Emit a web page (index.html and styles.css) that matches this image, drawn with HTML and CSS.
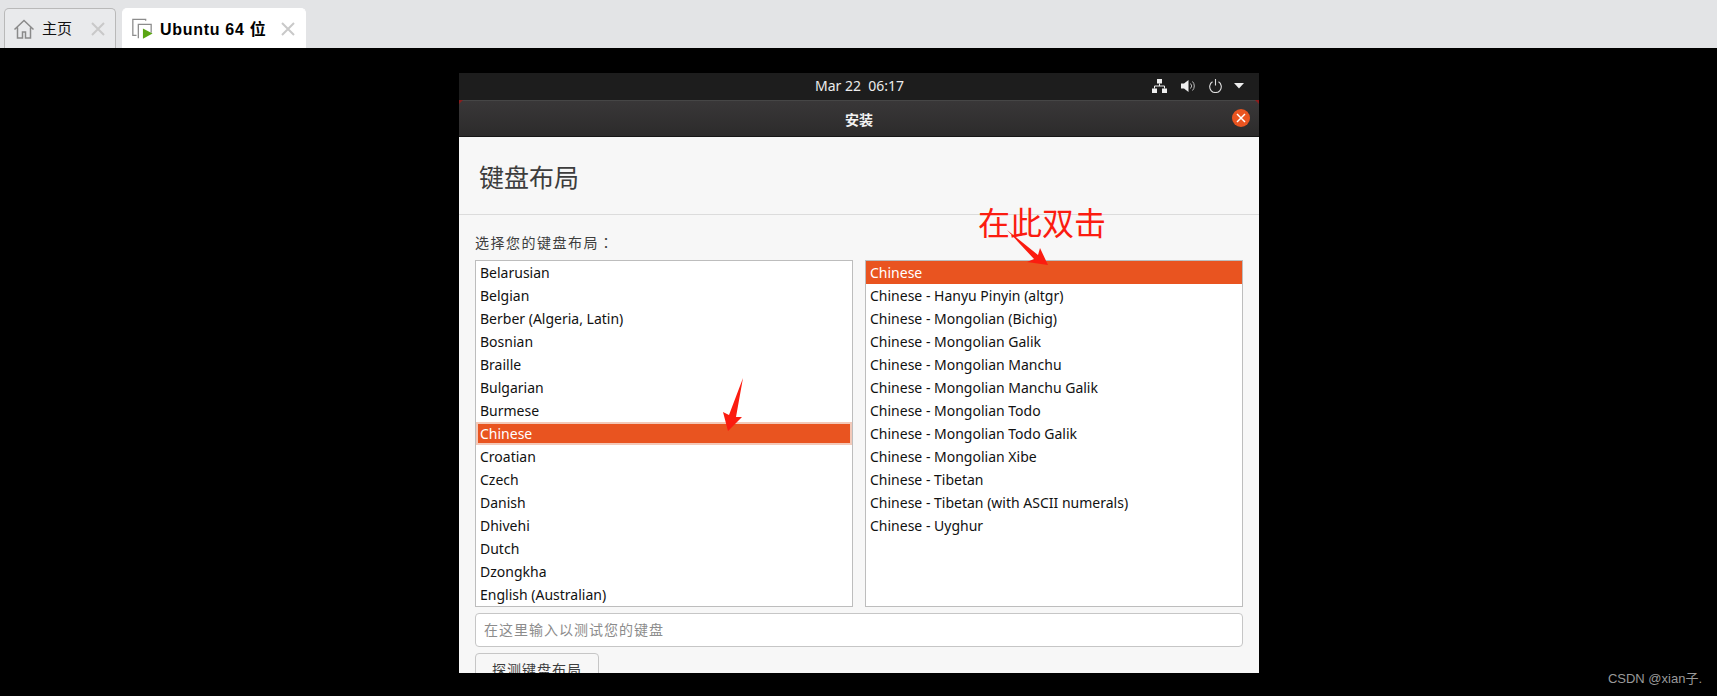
FILE: index.html
```html
<!DOCTYPE html>
<html lang="zh-CN">
<head>
  <meta charset="UTF-8">
  <title>Ubuntu 64 位</title>
  <link rel="stylesheet" href="styles.css">
</head>
<body>

<!-- VMware tabs -->
<div class="tabstrip">
  <div class="tab">
    <svg class="tab-icon" viewBox="0 0 22 22"><path d="M1.5 11.5 11 2.500l9.500 9M4.500 9.500V20h5v-6h3v6h5V9.500" fill="none" stroke="#8a8a8a" stroke-width="1.500"/></svg>
    <span class="tab-label">主页</span>
    <svg class="tab-close" viewBox="0 0 14 14"><path d="M1 1l12 12M13 1 1 13" stroke="#c9c9c9" stroke-width="2"/></svg>
  </div>
  <div class="tab active">
    <svg class="tab-icon" viewBox="0 0 24 24"><path d="M16 3V1.500H2V19h4M8 22V7h14v9" fill="none" stroke="#8c8c8c" stroke-width="1.400"/><path d="M13 11.500 23.500 17 13 22.500z" fill="#5aa512"/></svg>
    <span class="tab-label">Ubuntu 64 位</span>
    <svg class="tab-close" viewBox="0 0 14 14"><path d="M1 1l12 12M13 1 1 13" stroke="#c9c9c9" stroke-width="2"/></svg>
  </div>
</div>

<div class="stage">
  <div class="vm-window">

    <div class="topbar">
      <span class="clock">Mar 22&nbsp; 06:17</span>
      <div class="tray">
        <svg width="15" height="14" viewBox="0 0 15 14"><path d="M5 0h5v4.500H5zM0 9.500h5V14H0zM10 9.500h5V14h-5z" fill="#eee"/><path d="M7.500 4.500v2.500M2.500 9.500V7h10v2.500" fill="none" stroke="#eee"/></svg>
        <svg width="14" height="14" viewBox="0 0 14 14"><path d="M0 4.500h3L7.500 1v12L3 9.500H0z" fill="#eee"/><path d="M9.500 4.500a3.500 3.500 0 0 1 0 5M11.500 2.500a6.500 6.500 0 0 1 0 9" fill="none" stroke="#bbb"/></svg>
        <svg width="13" height="14" viewBox="0 0 13 14"><path d="M3.500 2.800a5.800 5.800 0 1 0 6 0M6.500 0v6.500" fill="none" stroke="#ddd" stroke-width="1.100"/></svg>
        <svg class="caret" width="10" height="6" viewBox="0 0 10 6"><path d="M0 0h10L5 5.500z" fill="#eee"/></svg>
      </div>
    </div>

    <div class="titlebar">
      <span class="title">安装</span>
      <span class="close-btn"><svg width="10" height="10" viewBox="0 0 10 10"><path d="M1 1l8 8M9 1 1 9" stroke="#fff" stroke-width="1.500"/></svg></span>
    </div>

    <div class="installer">
      <h1 class="page-title">键盘布局</h1>
      <div class="form">
        <label class="form-label" lang="ja">选择您的键盘布局：</label>
        <div class="lists">
          <ul class="list">
            <li>Belarusian</li>
            <li>Belgian</li>
            <li>Berber (Algeria, Latin)</li>
            <li>Bosnian</li>
            <li>Braille</li>
            <li>Bulgarian</li>
            <li>Burmese</li>
            <li class="selected focused">Chinese</li>
            <li>Croatian</li>
            <li>Czech</li>
            <li>Danish</li>
            <li>Dhivehi</li>
            <li>Dutch</li>
            <li>Dzongkha</li>
            <li>English (Australian)</li>
          </ul>
          <ul class="list">
            <li class="selected">Chinese</li>
            <li>Chinese - Hanyu Pinyin (altgr)</li>
            <li>Chinese - Mongolian (Bichig)</li>
            <li>Chinese - Mongolian Galik</li>
            <li>Chinese - Mongolian Manchu</li>
            <li>Chinese - Mongolian Manchu Galik</li>
            <li>Chinese - Mongolian Todo</li>
            <li>Chinese - Mongolian Todo Galik</li>
            <li>Chinese - Mongolian Xibe</li>
            <li>Chinese - Tibetan</li>
            <li>Chinese - Tibetan (with ASCII numerals)</li>
            <li>Chinese - Uyghur</li>
          </ul>
        </div>
        <input class="test-input" type="text" placeholder="在这里输入以测试您的键盘">
        <button class="detect-btn">探测键盘布局</button>
      </div>
    </div>
  </div>

  <!-- red annotations on top of the screenshot -->
  <span class="note">在此双击</span>
  <svg class="arrow arrow-right" width="60" height="50" viewBox="0 0 60 50"><path d="M7 5 38 30 40 23 48 40 27 37 34 34z" fill="#fb1c10"/></svg>
  <svg class="arrow arrow-left" width="50" height="70" viewBox="0 0 50 70"><path d="M33 8 26 47 32 47 18 61 13 42 19 45z" fill="#fb1c10"/></svg>

  <span class="watermark">CSDN @xian子.</span>
</div>

</body>
</html>
```

FILE: styles.css
```css
* {
  box-sizing: border-box;
}

html, body {
  height: 100%;
}

body {
  margin: 0;
  display: flex;
  flex-direction: column;
  overflow: hidden;
  font-family: "Noto Sans", "Noto Sans CJK SC", sans-serif;
  background: #000;
}

/* tabs */
.tabstrip {
  height: 48px;
  flex: none;
  display: flex;
  align-items: flex-end;
  gap: 6px;
  padding-left: 4px;
  background: #e3e4e6;
}

.tab {
  width: 112px;
  height: 40px;
  display: flex;
  align-items: center;
  padding: 0 10px 0 8px;
  background: #e9eaec;
  border: 1px solid #b9b9b9;
  border-bottom: none;
  border-radius: 5px 5px 0 0;
  font: 15px "Liberation Sans", "Noto Sans CJK SC", sans-serif;
  color: #111;
}

.tab.active {
  width: 184px;
  background: #fff;
  border-color: #fff;
  font-weight: bold;
  font-size: 16px;
  letter-spacing: 0.7px;
  color: #000;
}

.tab-icon {
  width: 22px;
  height: 22px;
  flex: none;
}

.tab-label {
  margin-left: 7px;
  padding-bottom: 2px;
  flex: 1;
  white-space: nowrap;
}

.tab-close {
  width: 14px;
  height: 14px;
  flex: none;
}

/* guest screen */
.stage {
  flex: 1;
  position: relative;
  padding-top: 25px;
  display: flex;
  justify-content: center;
}

.vm-window {
  width: 800px;
  height: 600px;
  margin-left: 1px;
  overflow: hidden;
  background: #f7f7f7;
  display: flex;
  flex-direction: column;
}

.topbar {
  height: 27px;
  flex: none;
  position: relative;
  display: flex;
  align-items: center;
  justify-content: center;
  padding: 0 0 2px 1px;
  background: #1d1d1d;
  color: #ececec;
  font-size: 14px;
}

.tray {
  position: absolute;
  right: 15px;
  top: 0;
  bottom: 2px;
  display: flex;
  align-items: center;
  gap: 14px;
}

.caret {
  margin-left: -2px;
}

.titlebar {
  height: 37px;
  flex: none;
  position: relative;
  display: flex;
  align-items: center;
  justify-content: center;
  background: linear-gradient(#393738, #2c2b2b);
  border-top: 1px solid #464646;
  border-bottom: 1px solid #161616;
  color: #f2f2f2;
  font-size: 14px;
  font-weight: bold;
}

/* little red corners the guest leaves behind the title bar */
.titlebar::before,
.titlebar::after {
  content: "";
  position: absolute;
  top: -1px;
  border-top: 4px solid #8c1c1c;
}

.titlebar::before {
  left: 0;
  border-right: 4px solid transparent;
}

.titlebar::after {
  right: 0;
  border-left: 4px solid transparent;
}

.close-btn {
  position: absolute;
  right: 9px;
  top: 8px;
  width: 18px;
  height: 18px;
  display: flex;
  align-items: center;
  justify-content: center;
  border-radius: 50%;
  background: #e95420;
}

.installer {
  flex: 1;
  min-height: 0;
}

.page-title {
  height: 78px;
  margin: 0;
  padding: 0 0 0 20px;
  display: flex;
  align-items: center;
  border-bottom: 1px solid #dcdcdc;
  font-size: 25px;
  font-weight: normal;
  color: #3d3d3d;
}

.form {
  padding: 19px 16px 0;
  display: flex;
  flex-direction: column;
  align-items: flex-start;
}

.form-label {
  height: 26px;
  font: 14px/17px "Noto Sans CJK JP", sans-serif;
  letter-spacing: 1.5px;
  color: #3d3d3d;
}

.lists {
  width: 100%;
  display: flex;
  gap: 12px;
}

.list {
  flex: 1;
  height: 347px;
  margin: 0;
  padding: 0;
  list-style: none;
  overflow: hidden;
  background: #fff;
  border: 1px solid #bdbdbd;
  font-size: 14px;
  color: #111;
}

.list li {
  height: 23px;
  line-height: 24px;
  padding-left: 4px;
  white-space: nowrap;
}

.list li.selected {
  background: #e95420;
  color: #fff;
}

.list li.focused {
  border: 2px solid #f3c9b9;
  padding-left: 2px;
  line-height: 20px;
}

.test-input {
  width: 100%;
  height: 34px;
  margin-top: 6px;
  padding: 0 8px 2px;
  background: #fff;
  border: 1px solid #c6c6c6;
  border-radius: 4px;
  font: 14px "Noto Sans CJK SC", sans-serif;
  letter-spacing: 1px;
}

.test-input::placeholder {
  color: #8c8c8c;
}

.detect-btn {
  width: 124px;
  height: 34px;
  margin-top: 6px;
  padding: 0 0 2px;
  flex: none;
  background: #f7f7f7;
  border: 1px solid #c6c6c6;
  border-radius: 4px;
  font: 14px "Noto Sans CJK SC", sans-serif;
  letter-spacing: 1px;
  color: #3d3d3d;
}

/* annotations */
.note {
  position: absolute;
  left: 978px;
  top: 151px;
  font: 32px/44px "Noto Sans CJK SC", sans-serif;
  color: #fb1c10;
}

.arrow {
  position: absolute;
}

.arrow-right {
  left: 1000px;
  top: 177px;
}

.arrow-left {
  left: 710px;
  top: 322px;
}

.watermark {
  position: absolute;
  right: 15px;
  bottom: 9px;
  font: 13px "Liberation Sans", "Noto Sans CJK SC", sans-serif;
  color: #9a9a9a;
}
```
